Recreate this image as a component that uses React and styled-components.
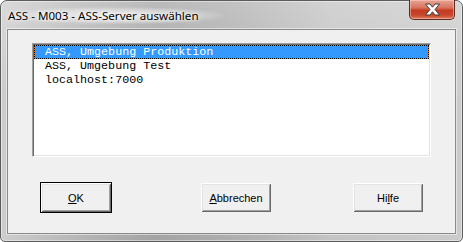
import styled, { createGlobalStyle } from 'styled-components';

const GlobalStyle = createGlobalStyle`
    html, body {
        margin: 0;
        padding: 0;
        background: #ffffff;
    }
    body {
        width: 463px;
        height: 242px;
        overflow: hidden;
    }
`;

const servers = [
    'ASS, Umgebung Produktion',
    'ASS, Umgebung Test',
    'localhost:7000',
];

const CloseGlyph = () => (
    <svg width="17" height="13" viewBox="0 0 17 13">
        <path
            d="M1.5 1 L6 1 L8.5 4.2 L11 1 L15.5 1 L11 6.5 L15.5 12 L11 12 L8.5 8.8 L6 12 L1.5 12 L6 6.5 Z"
            fill="#ffffff"
            stroke="#3e3e3e"
            strokeWidth="1"
            strokeLinejoin="round"
        />
    </svg>
);

const App = () => {
    return (
        <>
            <GlobalStyle />
            <Window>
                <TitleBar>
                    <Title>ASS - M003 - ASS-Server auswählen</Title>
                    <CloseButton>
                        <CloseGlyph />
                    </CloseButton>
                </TitleBar>
                <Client>
                    <ListBox>
                        {servers.map((name, i) => (
                            <ListItem key={name} $selected={i === 0}>
                                {name}
                            </ListItem>
                        ))}
                    </ListBox>
                    <ButtonRow>
                        <Button $default>
                            <u>O</u>K
                        </Button>
                        <Button $offset={88}>
                            <u>A</u>bbrechen
                        </Button>
                        <Button $offset={80}>
                            Hi<u>l</u>fe
                        </Button>
                    </ButtonRow>
                </Client>
            </Window>
        </>
    );
};

// styled components
const Window = styled.div`
    box-sizing: border-box;
    width: 463px;
    height: 242px;
    display: flex;
    flex-direction: column;
    padding: 0 6px 7px;
    border: 1px solid #5c5c5c;
    border-radius: 7px 7px 5px 5px;
    background:
        linear-gradient(180deg, rgba(255, 255, 255, 0.25), rgba(255, 255, 255, 0) 40%),
        linear-gradient(90deg, #cdcdcd 0%, #bababa 14%, #a3a3a3 34%, #b0b0b0 52%, #c4c4c4 72%, #cbcbcb 100%);
    box-shadow: inset 0 0 0 1px rgba(255, 255, 255, 0.45);
`;

const TitleBar = styled.div`
    height: 28px;
    display: flex;
    align-items: flex-start;
    justify-content: space-between;
`;

const Title = styled.div`
    margin-top: 6px;
    padding: 0 24px 0 1px;
    font-family: "Noto Sans", "Liberation Sans", sans-serif;
    font-size: 11.6px;
    line-height: 17px;
    color: #000;
    background: radial-gradient(ellipse at center, rgba(255, 255, 255, 0.75) 0%, rgba(255, 255, 255, 0.35) 50%, rgba(255, 255, 255, 0) 75%);
    text-shadow: 0 0 6px #fff, 0 0 3px #fff;
`;

const CloseButton = styled.div`
    box-sizing: border-box;
    width: 46px;
    height: 20px;
    margin-top: -1px;
    margin-right: 1px;
    display: flex;
    align-items: center;
    justify-content: center;
    border: 1px solid #5e2a22;
    border-top: none;
    border-radius: 0 0 5px 5px;
    background: linear-gradient(180deg, #e8a596 0%, #d8745f 40%, #c43b22 55%, #c9482c 80%, #dd7a5a 100%);
    box-shadow: inset 0 0 0 1px rgba(255, 210, 200, 0.5);
`;

const Client = styled.div`
    flex: 1;
    display: flex;
    flex-direction: column;
    border: 1px solid #8a8a8a;
    background: #f0f0f0;
    box-shadow: 0 0 0 1px rgba(255, 255, 255, 0.5);
`;

const ListBox = styled.div`
    box-sizing: border-box;
    width: 399px;
    height: 114px;
    margin: 13px 0 0 24px;
    padding: 1px;
    background: #fff;
    border-style: solid;
    border-width: 1px;
    border-color: #a0a0a0 #ffffff #ffffff #a0a0a0;
    box-shadow: inset 1px 1px 0 #696969, inset -1px -1px 0 #e3e3e3;
`;

const ListItem = styled.div`
    box-sizing: border-box;
    height: 14px;
    padding-left: 10px;
    font-family: "Liberation Mono", "Courier New", monospace;
    font-size: 11.7px;
    line-height: 13px;
    white-space: nowrap;
    color: ${(p) => (p.$selected ? '#ffffff' : '#000000')};
    border: 1px ${(p) => (p.$selected ? 'dotted #000000' : 'solid transparent')};
    background: ${(p) =>
        p.$selected
            ? 'linear-gradient(#3399ff, #3399ff) padding-box, #e07a1f border-box'
            : 'transparent'};
`;

const ButtonRow = styled.div`
    display: flex;
    margin: 25px 0 0 32px;
`;

const Button = styled.div`
    box-sizing: border-box;
    width: 72px;
    height: 31px;
    margin-left: ${(p) => p.$offset || 0}px;
    display: flex;
    align-items: center;
    justify-content: center;
    font-family: "Liberation Sans", Arial, sans-serif;
    font-size: 11px;
    color: #000;
    background: #f0f0f0;
    border: 1px solid ${(p) => (p.$default ? '#000000' : 'transparent')};
    box-shadow:
        inset 1px 1px 0 #ffffff,
        inset -1px -1px 0 #696969,
        inset 2px 2px 0 #e3e3e3,
        inset -2px -2px 0 #a0a0a0;

    u {
        text-decoration: underline;
        text-underline-offset: 1px;
    }
`;

export default App;
